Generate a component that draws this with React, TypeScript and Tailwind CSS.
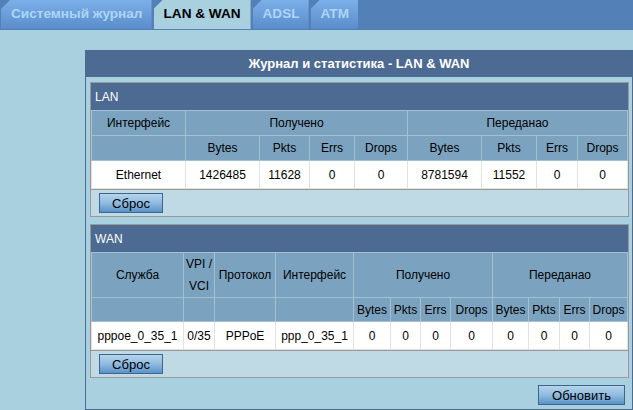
import React from "react";

const th = "border border-[#a3c1d3] bg-[#7ba3bf] font-normal text-black text-center";
const td = "border border-[#e2e2e2] bg-white text-center";

function Tab({ label, active }: { label: string; active?: boolean }) {
  return (
    <div
      className={
        "flex h-[29px] items-end pb-[5px] font-bold text-[13.6px] [clip-path:polygon(9px_0,100%_0,100%_100%,0_100%,0_9px)] " +
        (active
          ? "bg-[#a9d0de] text-black pl-[10px] pr-[10px]"
          : "bg-gradient-to-b from-[#7cb0e8] to-[#5b8ccb] text-[#acd6f5] pl-[10px] pr-[9px]")
      }
    >
      {label}
    </div>
  );
}

function Btn({ label, w }: { label: string; w: string }) {
  return (
    <button
      className={
        "h-[20px] border border-[#3f6490] bg-gradient-to-b from-[#b5d4ea] via-[#8fbbe0] to-[#5a93c6] text-[13px] leading-none text-black " +
        w
      }
    >
      {label}
    </button>
  );
}

export default function App() {
  return (
    <div className="h-[410px] w-[633px] overflow-hidden bg-[#a9d0de] font-['Liberation_Sans',Arial,sans-serif] text-[12px]">
      <div className="flex h-[30px] gap-[2px] bg-[#5380b7] pl-[1px]">
        <Tab label="Системный журнал" />
        <Tab label="LAN & WAN" active />
        <Tab label="ADSL" />
        <Tab label="ATM" />
      </div>

      <div className="ml-[85px] mt-[20px] w-[548px] border border-t-0 border-[#4c6a92]">
        <div className="flex h-[27px] items-center justify-center bg-[#4c6a92] text-[13px] font-bold text-white">
          Журнал и статистика - LAN &amp; WAN
        </div>
        <div className="pl-[4px] pr-[3px] pt-[5px] pb-[4px]">
          {/* LAN */}
          <div className="border border-[#999]">
            <div className="flex h-[27px] items-center bg-[#4c6a92] px-[4px] text-[12px] text-white">LAN</div>
            <table className="w-full table-fixed border-collapse">
              <colgroup>
                <col className="w-[94px]" />
                <col className="w-[74px]" />
                <col className="w-[50px]" />
                <col className="w-[45px]" />
                <col className="w-[53px]" />
                <col className="w-[74px]" />
                <col className="w-[55px]" />
                <col className="w-[41px]" />
                <col />
              </colgroup>
              <thead>
                <tr className="h-[25px]">
                  <th className={th}>Интерфейс</th>
                  <th className={th} colSpan={4}>Получено</th>
                  <th className={th} colSpan={4}>Переданао</th>
                </tr>
                <tr className="h-[25px]">
                  <th className={th}></th>
                  <th className={th}>Bytes</th>
                  <th className={th}>Pkts</th>
                  <th className={th}>Errs</th>
                  <th className={th}>Drops</th>
                  <th className={th}>Bytes</th>
                  <th className={th}>Pkts</th>
                  <th className={th}>Errs</th>
                  <th className={th}>Drops</th>
                </tr>
              </thead>
              <tbody>
                <tr className="h-[28px]">
                  {["Ethernet", "1426485", "11628", "0", "0", "8781594", "11552", "0", "0"].map((v, i) => (
                    <td key={i} className={td}>{v}</td>
                  ))}
                </tr>
              </tbody>
            </table>
            <div className="flex h-[27px] items-center border-t border-[#999] bg-[#bfdae4] pl-[8px]">
              <Btn label="Сброс" w="w-[64px]" />
            </div>
          </div>

          {/* WAN */}
          <div className="mt-[7px] border border-[#999]">
            <div className="flex h-[27px] items-center bg-[#4c6a92] px-[4px] text-[12px] text-white">WAN</div>
            <table className="w-full table-fixed border-collapse">
              <colgroup>
                <col className="w-[92px]" />
                <col className="w-[31px]" />
                <col className="w-[61px]" />
                <col className="w-[78px]" />
                <col className="w-[37px]" />
                <col className="w-[30px]" />
                <col className="w-[30px]" />
                <col className="w-[42px]" />
                <col className="w-[36px]" />
                <col className="w-[31px]" />
                <col className="w-[30px]" />
                <col />
              </colgroup>
              <thead>
                <tr className="h-[43px]">
                  <th className={th}>Служба</th>
                  <th className={th + " leading-[22px]"}>VPI /<br />VCI</th>
                  <th className={th}>Протокол</th>
                  <th className={th}>Интерфейс</th>
                  <th className={th} colSpan={4}>Получено</th>
                  <th className={th} colSpan={4}>Переданао</th>
                </tr>
                <tr className="h-[24px]">
                  <th className={th}></th>
                  <th className={th}></th>
                  <th className={th}></th>
                  <th className={th}></th>
                  <th className={th}>Bytes</th>
                  <th className={th}>Pkts</th>
                  <th className={th}>Errs</th>
                  <th className={th}>Drops</th>
                  <th className={th}>Bytes</th>
                  <th className={th}>Pkts</th>
                  <th className={th}>Errs</th>
                  <th className={th}>Drops</th>
                </tr>
              </thead>
              <tbody>
                <tr className="h-[28px]">
                  {["pppoe_0_35_1", "0/35", "PPPoE", "ppp_0_35_1", "0", "0", "0", "0", "0", "0", "0", "0"].map((v, i) => (
                    <td key={i} className={td + " whitespace-nowrap"}>{v}</td>
                  ))}
                </tr>
              </tbody>
            </table>
            <div className="flex h-[27px] items-center border-t border-[#999] bg-[#bfdae4] pl-[8px]">
              <Btn label="Сброс" w="w-[64px]" />
            </div>
          </div>

          <div className="mt-[7px] flex h-[20px] justify-end pr-[4px]">
            <Btn label="Обновить" w="w-[87px]" />
          </div>
        </div>
      </div>
    </div>
  );
}
